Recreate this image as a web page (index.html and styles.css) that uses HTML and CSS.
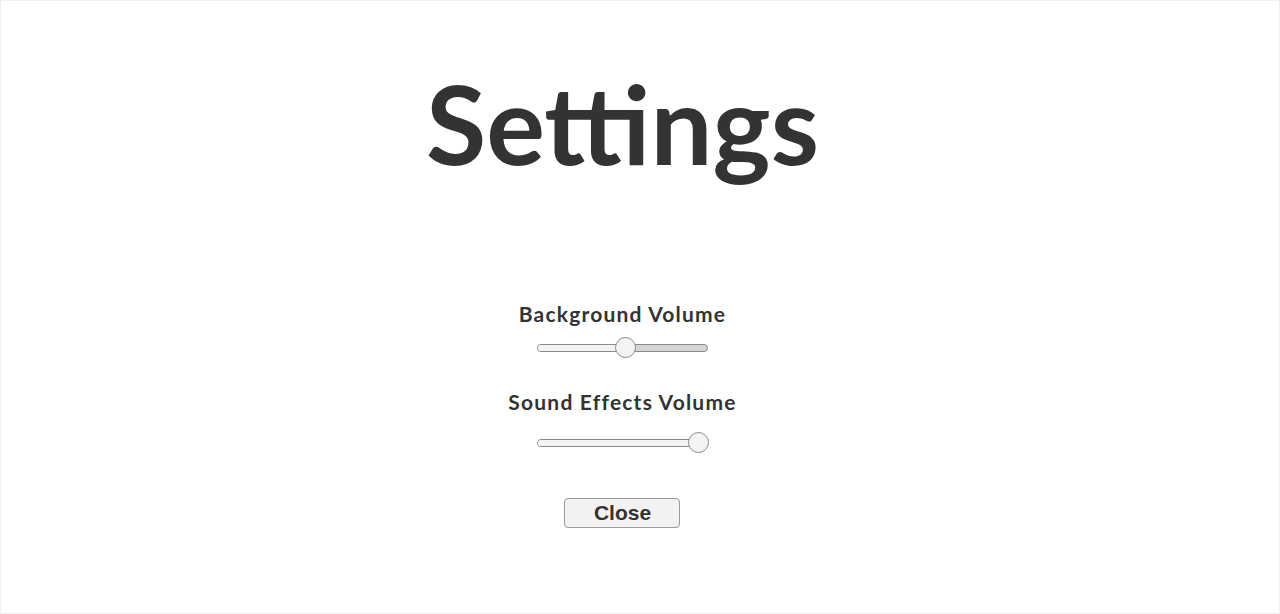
FILE: index.html
```html
<!DOCTYPE html>
<html>
<head>
<meta charset="utf-8">
<link rel="stylesheet" href="styles.css">
</head>
<body>
<main class="page">
  <h1 class="title">Settings</h1>
  <section class="controls">
    <div class="setting">
      <div class="label">Background Volume</div>
      <div class="slider">
        <div class="track">
          <div class="fill fill-half"></div>
        </div>
        <div class="thumb thumb-half"></div>
      </div>
    </div>
    <div class="setting setting-effects">
      <div class="label">Sound Effects Volume</div>
      <div class="slider">
        <div class="track">
          <div class="fill fill-full"></div>
        </div>
        <div class="thumb thumb-full"></div>
      </div>
    </div>
    <button class="close">Close</button>
  </section>
</main>
</body>
</html>
```
FILE: styles.css
```css
html, body {
  margin: 0;
  padding: 0;
  background: #fff;
}
body {
  width: 1280px;
  height: 614px;
  box-sizing: border-box;
  border: 1px solid #efefef;
  font-family: "Lato", "DejaVu Sans", sans-serif;
  color: #333;
}
.page {
  display: flex;
  flex-direction: column;
  align-items: center;
  padding-right: 35px;
}
.title {
  margin: 51px 0 0 0;
  font-size: 110px;
  font-weight: 700;
  line-height: 140px;
  color: #333;
}
.controls {
  margin-top: 109px;
  display: flex;
  flex-direction: column;
  align-items: center;
}
.setting {
  display: flex;
  flex-direction: column;
  align-items: center;
  margin-bottom: 30px;
}
.label {
  font-size: 21px;
  font-weight: 700;
  line-height: 26px;
  letter-spacing: 1.2px;
  color: #333;
}
.slider {
  position: relative;
  width: 171px;
  height: 22px;
  margin-top: 10px;
  display: flex;
  align-items: center;
}
.setting-effects .slider {
  margin-top: 17px;
}
.setting-effects {
  margin-bottom: 44px;
}
.track {
  width: 100%;
  height: 8px;
  box-sizing: border-box;
  border: 1px solid #8a8a8a;
  border-radius: 5px;
  background: #d4d4d4;
  overflow: hidden;
}
.fill {
  height: 100%;
  background: #f3f3f3;
}
.fill-half { width: 52%; }
.fill-full { width: 100%; }
.thumb {
  position: absolute;
  top: 0;
  width: 21px;
  height: 21px;
  box-sizing: border-box;
  border: 1px solid #8a8a8a;
  border-radius: 50%;
  background: #f3f3f3;
}
.thumb-half { left: 78px; }
.thumb-full { left: 151px; }
.close {
  width: 116px;
  height: 30px;
  background: #f2f2f2;
  border: 1px solid #9a9a9a;
  border-radius: 4px;
  font-family: "Liberation Sans", Arial, sans-serif;
  font-weight: 700;
  font-size: 21px;
  color: #333;
  padding: 0;
}
```
